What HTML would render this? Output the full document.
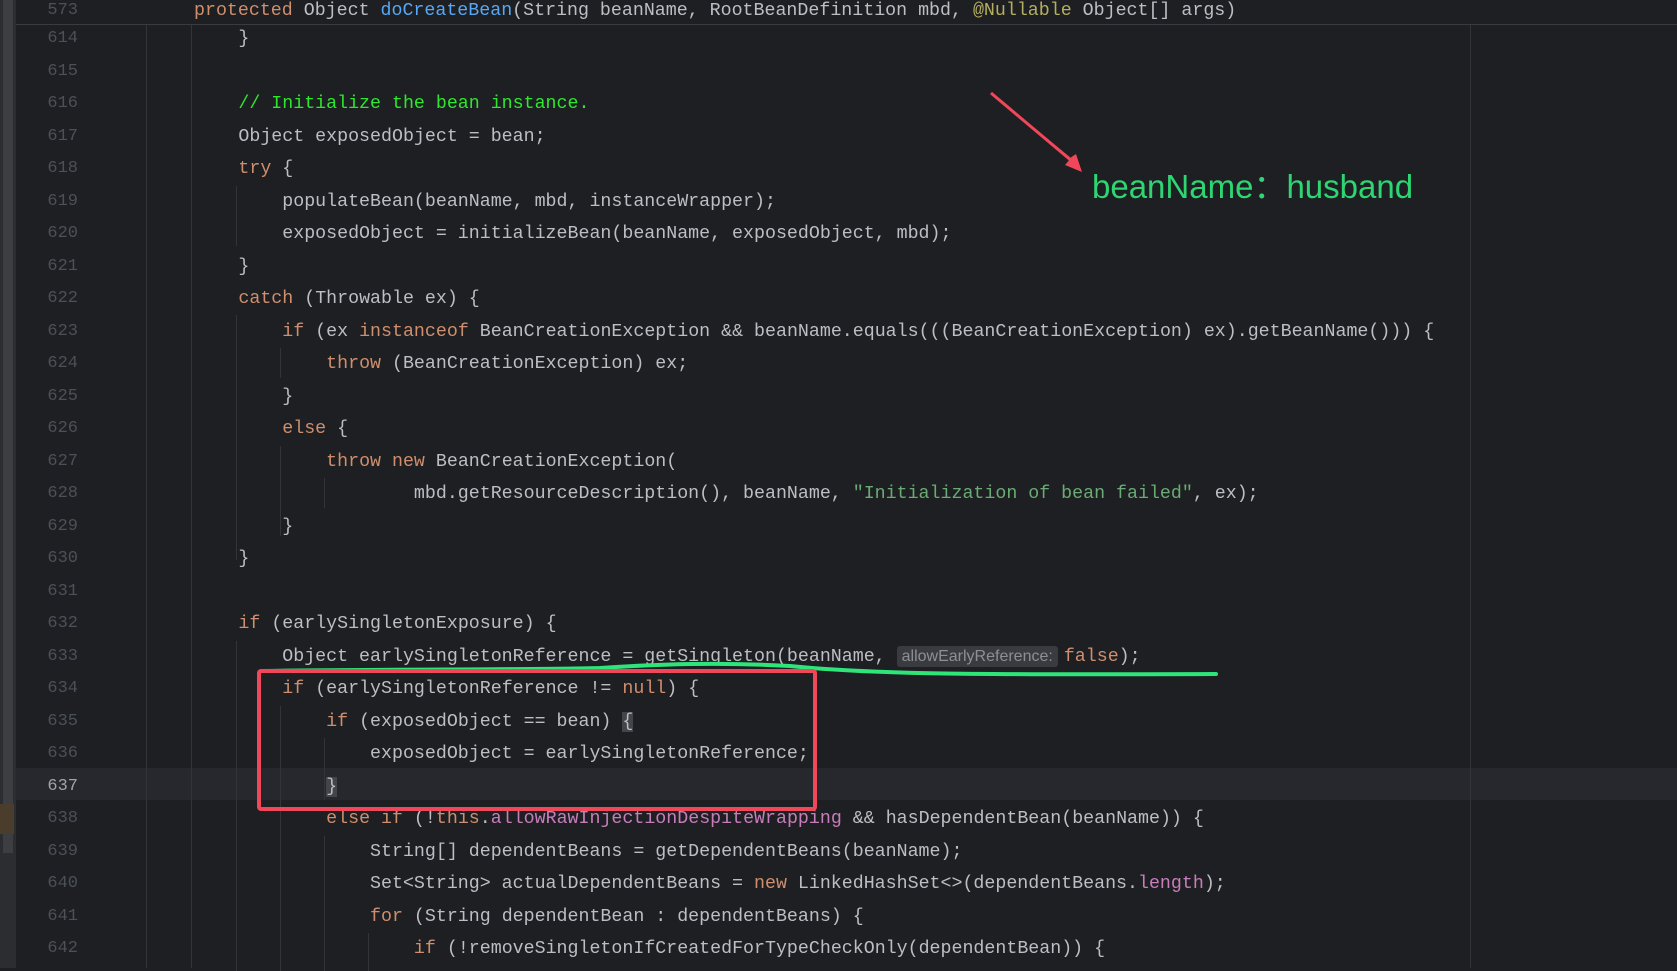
<!DOCTYPE html>
<html><head><meta charset="utf-8"><style>
html,body{margin:0;padding:0;}
body{width:1677px;height:968px;background:#1e1f22;position:relative;overflow:hidden;font-family:"Liberation Mono","DejaVu Sans Mono",monospace;font-size:18.3px;color:#bcbec4;}
.ln{position:absolute;left:0;width:78px;text-align:right;color:#4b5059;height:32.5px;line-height:32.5px;margin-top:3px;font-size:17px;}
.c{position:absolute;left:194.5px;white-space:pre;height:32.5px;line-height:32.5px;margin-top:3px;}
.k{color:#cf8e6d}.m{color:#56a8f5}.s{color:#6aab73}.cm{color:#2ee62e}.a{color:#b3ae60}.p{color:#c77dbb}
.g{position:absolute;width:1px;background:#313438;}
.hint{font-family:"Liberation Sans",sans-serif;font-size:16px;color:#8c8f94;background:#393b40;border-radius:3px;padding:2px 5px;margin-right:6px;}
</style></head><body>
<div style="position:absolute;left:16px;top:768px;width:1661px;height:32px;background:#26282e"></div>
<div style="position:absolute;left:0;top:0;width:16px;height:968px;background:#2b2d30"></div>
<div style="position:absolute;left:3px;top:0;width:10px;height:853px;background:#3c3e42"></div>
<div style="position:absolute;left:0;top:804px;width:14px;height:30px;background:#4a3d2c"></div>
<div class="g" style="left:146px;top:24px;height:944px"></div>
<div class="g" style="left:191px;top:24px;height:944px"></div>
<div class="g" style="left:1470px;top:24px;height:944px"></div>
<div class="g" style="left:236px;top:186px;height:60px"></div>
<div class="g" style="left:236px;top:315px;height:245px"></div>
<div class="g" style="left:280px;top:348px;height:30px"></div>
<div class="g" style="left:280px;top:446px;height:90px"></div>
<div class="g" style="left:324px;top:478px;height:30px"></div>
<div class="g" style="left:236px;top:641px;height:330px"></div>
<div class="g" style="left:280px;top:706px;height:265px"></div>
<div class="g" style="left:324px;top:738px;height:62px"></div>
<div class="g" style="left:324px;top:836px;height:135px"></div>
<div class="g" style="left:368px;top:933px;height:38px"></div>

<div class="ln" style="top:20px">614</div><div class="c" style="top:20px">    }</div>
<div class="ln" style="top:52.5px">615</div>
<div class="ln" style="top:85px">616</div><div class="c cm" style="top:85px">    // Initialize the bean instance.</div>
<div class="ln" style="top:117.5px">617</div><div class="c" style="top:117.5px">    Object exposedObject = bean;</div>
<div class="ln" style="top:150px">618</div><div class="c" style="top:150px">    <span class="k">try</span> {</div>
<div class="ln" style="top:182.5px">619</div><div class="c" style="top:182.5px">        populateBean(beanName, mbd, instanceWrapper);</div>
<div class="ln" style="top:215px">620</div><div class="c" style="top:215px">        exposedObject = initializeBean(beanName, exposedObject, mbd);</div>
<div class="ln" style="top:247.5px">621</div><div class="c" style="top:247.5px">    }</div>
<div class="ln" style="top:280px">622</div><div class="c" style="top:280px">    <span class="k">catch</span> (Throwable ex) {</div>
<div class="ln" style="top:312.5px">623</div><div class="c" style="top:312.5px">        <span class="k">if</span> (ex <span class="k">instanceof</span> BeanCreationException &amp;&amp; beanName.equals(((BeanCreationException) ex).getBeanName())) {</div>
<div class="ln" style="top:345px">624</div><div class="c" style="top:345px">            <span class="k">throw</span> (BeanCreationException) ex;</div>
<div class="ln" style="top:377.5px">625</div><div class="c" style="top:377.5px">        }</div>
<div class="ln" style="top:410px">626</div><div class="c" style="top:410px">        <span class="k">else</span> {</div>
<div class="ln" style="top:442.5px">627</div><div class="c" style="top:442.5px">            <span class="k">throw new</span> BeanCreationException(</div>
<div class="ln" style="top:475px">628</div><div class="c" style="top:475px">                    mbd.getResourceDescription(), beanName, <span class="s">"Initialization of bean failed"</span>, ex);</div>
<div class="ln" style="top:507.5px">629</div><div class="c" style="top:507.5px">        }</div>
<div class="ln" style="top:540px">630</div><div class="c" style="top:540px">    }</div>
<div class="ln" style="top:572.5px">631</div>
<div class="ln" style="top:605px">632</div><div class="c" style="top:605px">    <span class="k">if</span> (earlySingletonExposure) {</div>
<div class="ln" style="top:637.5px">633</div><div class="c" style="top:637.5px">        Object earlySingletonReference = getSingleton(beanName, <span class="hint">allowEarlyReference:</span><span class="k">false</span>);</div>
<div class="ln" style="top:670px">634</div><div class="c" style="top:670px">        <span class="k">if</span> (earlySingletonReference != <span class="k">null</span>) {</div>
<div class="ln" style="top:702.5px">635</div><div class="c" style="top:702.5px">            <span class="k">if</span> (exposedObject == bean) <span style="background:#43454a">{</span></div>
<div class="ln" style="top:735px">636</div><div class="c" style="top:735px">                exposedObject = earlySingletonReference;</div>
<div class="ln" style="top:767.5px;color:#a1a3ab">637</div><div class="c" style="top:767.5px">            <span style="background:#43454a">}</span></div>
<div class="ln" style="top:800px">638</div><div class="c" style="top:800px">            <span class="k">else if</span> (!<span class="k">this</span>.<span class="p">allowRawInjectionDespiteWrapping</span> &amp;&amp; hasDependentBean(beanName)) {</div>
<div class="ln" style="top:832.5px">639</div><div class="c" style="top:832.5px">                String[] dependentBeans = getDependentBeans(beanName);</div>
<div class="ln" style="top:865px">640</div><div class="c" style="top:865px">                Set&lt;String&gt; actualDependentBeans = <span class="k">new</span> LinkedHashSet&lt;&gt;(dependentBeans.<span class="p">length</span>);</div>
<div class="ln" style="top:897.5px">641</div><div class="c" style="top:897.5px">                <span class="k">for</span> (String dependentBean : dependentBeans) {</div>
<div class="ln" style="top:930px">642</div><div class="c" style="top:930px">                    <span class="k">if</span> (!removeSingletonIfCreatedForTypeCheckOnly(dependentBean)) {</div>

<div style="position:absolute;left:16px;top:0;width:1661px;height:24px;background:#1e1f22;border-bottom:1px solid #393b40"></div>
<div class="ln" style="top:-5px;margin-top:0">573</div>
<div class="c" style="top:-5px;left:194px;margin-top:0"><span class="k">protected</span> Object <span class="m">doCreateBean</span>(String beanName, RootBeanDefinition mbd, <span class="a">@Nullable</span> Object[] args)</div>

<svg style="position:absolute;left:0;top:0" width="1677" height="968">
<path d="M262 671 C400 669 520 670 600 668 C660 664 720 662 790 666 C870 674 960 675 1216 674" stroke="#2ee57a" stroke-width="4" fill="none" stroke-linecap="round"/>
<rect x="259" y="671" width="556" height="138" rx="2" fill="none" stroke="#f0475a" stroke-width="4"/>
<path d="M991 93 L1071 158 L1065 165 L1082 172 L1076 154 L1070 158 Z" fill="#f0475a"/>
<path d="M991 93 L1073 162" stroke="#f0475a" stroke-width="3"/>
<text x="1092" y="198" font-family="Liberation Sans, Noto Sans CJK SC, sans-serif" font-size="33" fill="#2ed573">beanName：husband</text>
</svg>
</body></html>
